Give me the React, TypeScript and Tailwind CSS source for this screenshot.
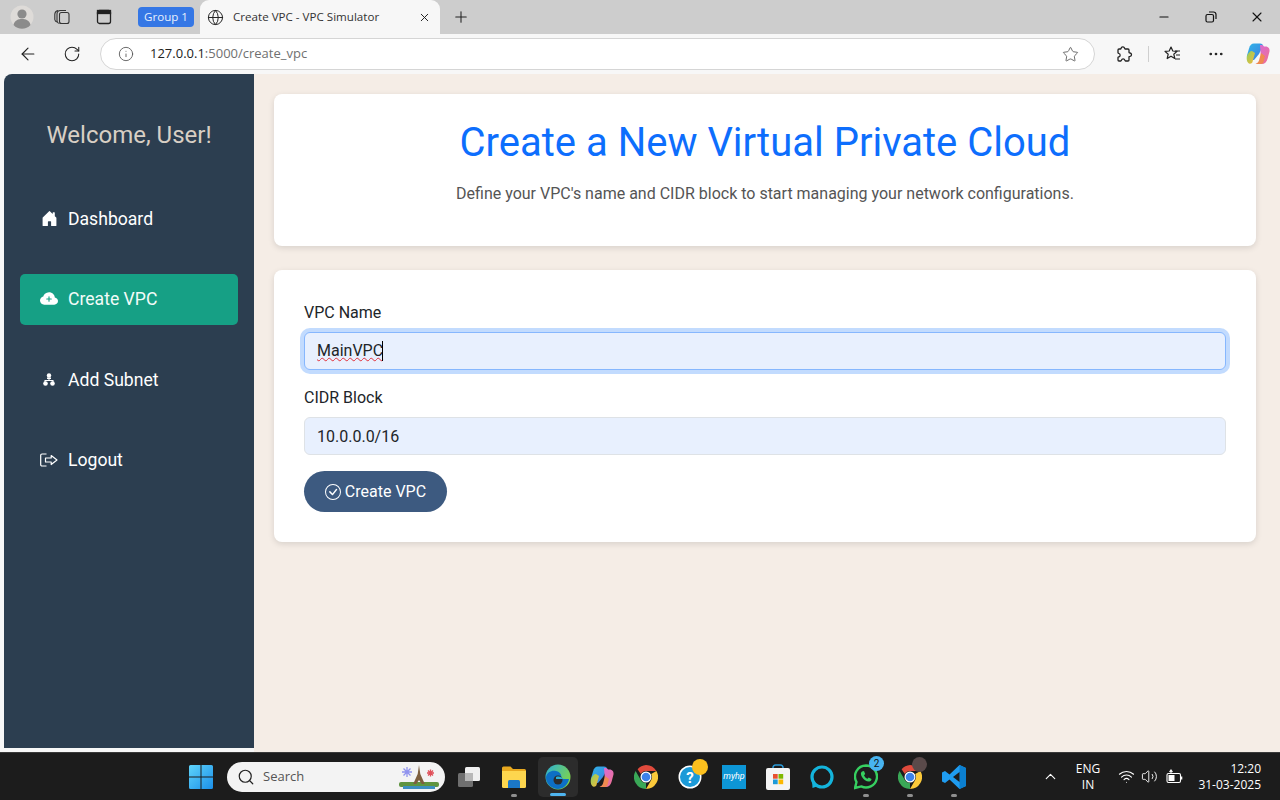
import React from "react";
import { BsHouseDoorFill, BsCloudPlusFill, BsCheckCircle } from "react-icons/bs";
import { ArrowLeft, RotateCw, Info, Star, Plus, X, Minus, Globe, Search, ChevronUp, Volume2, Wifi, MoreHorizontal } from "lucide-react";

const roboto = { fontFamily: "Roboto, sans-serif" };
const openSans = { fontFamily: "'Open Sans', sans-serif" };

function TabsIcon() {
  return (
    <svg width="18" height="18" viewBox="0 0 18 18" fill="none" stroke="#333" strokeWidth="1.1">
      <rect x="6.5" y="4.500" width="9.500" height="11" rx="2" />
      <path d="M6.500 15.500A3 3 0 0 1 4 13V6A3.500 3.500 0 0 1 7.500 2.500H13" />
      <path d="M4 14A3 3 0 0 1 1.800 11.500V6A4 4 0 0 1 5 2.500" />
    </svg>
  );
}
function VerticalTabs() {
  return (
    <svg width="16" height="16" viewBox="0 0 16 16" fill="none" stroke="#222" strokeWidth="1.3">
      <rect x="1.5" y="1.5" width="13" height="13" rx="2" />
      <rect x="1.5" y="1.5" width="13" height="3" fill="#222" />
    </svg>
  );
}
function Avatar() {
  return (
    <svg width="24" height="24" viewBox="0 0 24 24">
      <circle cx="12" cy="12" r="11.5" fill="#dedbd8" />
      <circle cx="12" cy="9" r="4.6" fill="#8b8b8b" />
      <path d="M3.5 20c1-5 5-6 8.500-6s7.500 1 8.500 6a11.500 11.500 0 0 1-17 0z" fill="#8b8b8b" />
    </svg>
  );
}
function Puzzle() {
  return (
    <svg width="18" height="18" viewBox="0 0 18 18" fill="none" stroke="#222" strokeWidth="1.3" strokeLinejoin="round">
      <path d="M6 3.500c.5-2 3-2 3.500-.5.2.6.200 1 .5 1h3a1 1 0 0 1 1 1v2.500c0 .5.500.5 1 .5 2 .3 2 3 0 3.300-.5 0-1 0-1 .5V15a1 1 0 0 1-1 1h-2.500c-.5 0-.5-.5-.7-1-.5-1.500-2.800-1.500-3.300 0-.2.500-.2 1-.7 1H4a1 1 0 0 1-1-1v-2.500c0-.5.500-.5 1-.7 1.500-.5 1.500-2.800 0-3.300-.5-.2-1-.2-1-.7V5a1 1 0 0 1 1-1h1.500c.3 0 .4-.2.500-.5z" />
    </svg>
  );
}
function Favorites() {
  return (
    <svg width="18" height="18" viewBox="0 0 18 18" fill="none" stroke="#222" strokeWidth="1.2" strokeLinejoin="round">
      <path d="M8 2l1.800 4 4.200.4-3.200 2.800 1 4.300L8 11.200l-3.800 2.300 1-4.300L2 6.400 6.200 6z" />
      <path d="M12 6h5M13 10h4M12 14h5" />
    </svg>
  );
}
function Copilot({ size = 24, id }: { size?: number; id: string }) {
  return (
    <svg width={size} height={size} viewBox="0 0 24 24">
      <defs>
        <linearGradient id={id + "a"} x1="0" y1="0" x2="1" y2="1">
          <stop offset="0" stopColor="#2fb6e8" />
          <stop offset="1" stopColor="#3f7be0" />
        </linearGradient>
        <linearGradient id={id + "b"} x1="0" y1="0" x2="1" y2="1">
          <stop offset="0" stopColor="#d56be0" />
          <stop offset="1" stopColor="#f0708c" />
        </linearGradient>
        <linearGradient id={id + "c"} x1="0" y1="0" x2="1" y2="1">
          <stop offset="0" stopColor="#8ed05a" />
          <stop offset="1" stopColor="#f5b93c" />
        </linearGradient>
      </defs>
      <path d="M8 1.500h6c2 0 3 1 3 2.500l-4 8-5 6H5c-3 0-4.500-2-4-4.500l2-7C4 3 5.500 1.500 8 1.500z" fill={`url(#${id}a)`} />
      <path d="M1 14c1-3 3-5 5-5l3 2-2.500 9c-.5 1.500-2 2-3.500 1.500C1 20.500.2 17 1 14z" fill={`url(#${id}c)`} />
      <path d="M14 3h1c1.500 0 2.500.5 3 1.500h1.500c3 0 4.500 2.500 4 5l-2 7.500c-.8 3-3 5-5.500 5H10c3-1 4-3 5-6z" fill={`url(#${id}b)`} />
      <path d="M15 11l-2 7.500c-.5 1.500-1.500 2.800-3.500 3.500H15c1 0 2-.8 2.500-2l1.500-6z" fill="#f08a50" />
    </svg>
  );
}
function LogoutIcon() {
  return (
    <svg width="18" height="14" viewBox="0 0 18 14" fill="none" stroke="#fff" strokeWidth="1.200" strokeLinejoin="round">
      <path d="M6.500 1H2a1.300 1.300 0 0 0-1.300 1.300v9.400A1.300 1.300 0 0 0 2 13h4.500" />
      <path d="M5.500 5h5.700V2.500L17 7l-5.800 4.500V9H5.500z" />
    </svg>
  );
}
function SubnetIcon() {
  return (
    <svg width="12" height="13" viewBox="0 0 12 13" fill="#fff">
      <circle cx="6" cy="2.500" r="2.200" />
      <path d="M4 4.500h4V6H4z" />
      <path d="M5.500 5.500h1V7h4v2h-1V8h-7v1h-1V7h4z" />
      <circle cx="2.500" cy="10.500" r="2.300" />
      <circle cx="9.500" cy="10.500" r="2.300" />
    </svg>
  );
}
function Windows() {
  return (
    <svg width="24" height="24" viewBox="0 0 24 24">
      <defs>
        <linearGradient id="win" x1="0" y1="0" x2="1" y2="1">
          <stop offset="0" stopColor="#5fd4fa" />
          <stop offset="1" stopColor="#1b8fe8" />
        </linearGradient>
      </defs>
      <path d="M0 1.500A1.500 1.500 0 0 1 1.500 0h10v11.500H0zM12.500 0h10A1.500 1.500 0 0 1 24 1.500v10H12.500zM0 12.500h11.500V24h-10A1.500 1.500 0 0 1 0 22.500zM12.500 12.500H24v10a1.500 1.500 0 0 1-1.500 1.500h-10z" fill="url(#win)" />
    </svg>
  );
}
function Eiffel() {
  return (
    <svg width="42" height="26" viewBox="0 0 42 26">
      <rect x="1" y="18" width="40" height="5" rx="2" fill="#5f9440" />
      <rect x="5" y="22" width="32" height="3" fill="#3d8fc0" />
      <path d="M21 1l1.300 9 4.500 10h-3l-2.800-4-2.800 4h-3l4.500-10z" fill="#7d5f3f" />
      <g stroke="#8f92ee" strokeWidth="1.300">
        <path d="M4 8h10M9 3v10M5.500 4.500l7 7M12.500 4.500l-7 7" />
      </g>
      <g stroke="#e0505a" strokeWidth="1.300">
        <path d="M29 9h7M32.500 5.500v7M30 6.500l5 5M35 6.500l-5 5" />
      </g>
    </svg>
  );
}
function TaskView() {
  return (
    <svg width="24" height="24" viewBox="0 0 24 24">
      <rect x="8" y="2" width="15" height="14" rx="1.500" fill="#f0f0f0" />
      <rect x="1" y="8" width="15" height="14" rx="1.500" fill="#6f6f6f" />
      <rect x="8" y="8" width="8" height="8" fill="#b8b8b8" />
    </svg>
  );
}
function Folder() {
  return (
    <svg width="24" height="24" viewBox="0 0 24 24">
      <path d="M0 3a1.500 1.500 0 0 1 1.500-1.500h7L11 4h11.500A1.500 1.500 0 0 1 24 5.500V8H0z" fill="#e9a91f" />
      <path d="M0 6h24v15.500a1.500 1.500 0 0 1-1.500 1.500h-21A1.500 1.500 0 0 1 0 21.500z" fill="#fdd64e" />
      <path d="M6 16.500a1.500 1.500 0 0 1 1.500-1.500h9a1.500 1.500 0 0 1 1.500 1.500V23H6z" fill="#1b78c8" />
    </svg>
  );
}
function Edge() {
  return (
    <svg width="26" height="26" viewBox="0 0 26 26">
      <defs>
        <linearGradient id="edg" x1="0" y1="0" x2="1" y2="0.600">
          <stop offset="0" stopColor="#2ab0d8" />
          <stop offset="1" stopColor="#7fd44a" />
        </linearGradient>
      </defs>
      <circle cx="13" cy="13" r="12.500" fill="url(#edg)" />
      <path d="M1 13C2 8 7 6 11 7c5 1 6 5 5 8h8c-1 6-6 10-11 10C7 25 .5 20 1 13z" fill="#0d6fc4" />
      <circle cx="13" cy="16" r="4.500" fill="#2c2c2c" />
      <path d="M11 13c3-1 6 0 7 2h-7z" fill="#2ab0d8" />
    </svg>
  );
}
function Chrome({ size = 24 }: { size?: number }) {
  return (
    <svg width={size} height={size} viewBox="0 0 24 24">
      <path d="M12 0a12 12 0 0 1 10.400 6H12a6 6 0 0 0-5.200 3L3.600 4.300A12 12 0 0 1 12 0z" fill="#e04a3c" />
      <path d="M22.400 6A12 12 0 0 1 12 24l5.200-9a6 6 0 0 0 0-6z" fill="#fbc93a" />
      <path d="M12 24A12 12 0 0 1 1.600 6l5.200 9a6 6 0 0 0 5.200 3z" fill="#3aa857" />
      <circle cx="12" cy="12" r="5.500" fill="#fff" />
      <circle cx="12" cy="12" r="4.300" fill="#3d82ea" />
    </svg>
  );
}
function Help() {
  return (
    <svg width="24" height="24" viewBox="0 0 24 24">
      <circle cx="12" cy="12" r="11.500" fill="#fff" />
      <circle cx="12" cy="12" r="10" fill="#1b9ad8" />
      <text x="12" y="17.500" textAnchor="middle" fontSize="15" fontWeight="700" fill="#fff" fontFamily="Roboto, sans-serif">?</text>
    </svg>
  );
}
function Store() {
  return (
    <svg width="24" height="26" viewBox="0 0 24 26">
      <path d="M7 5V3.500A2.500 2.500 0 0 1 9.500 1h5A2.500 2.500 0 0 1 17 3.500V5" fill="none" stroke="#2a9ad8" strokeWidth="1.500" />
      <rect x="0" y="4" width="24" height="22" rx="2" fill="#f4f4f4" />
      <rect x="7" y="10" width="4.700" height="4.700" fill="#e8502f" />
      <rect x="12.500" y="10" width="4.700" height="4.700" fill="#7fb800" />
      <rect x="7" y="15.500" width="4.700" height="4.700" fill="#1c9ad8" />
      <rect x="12.500" y="15.500" width="4.700" height="4.700" fill="#fcb800" />
    </svg>
  );
}
function Alexa() {
  return (
    <svg width="24" height="24" viewBox="0 0 24 24">
      <circle cx="12" cy="12" r="10" fill="none" stroke="#14b4dc" strokeWidth="3.200" />
      <path d="M2 14l.5 9 6-2z" fill="#14b4dc" />
    </svg>
  );
}
function Whatsapp() {
  return (
    <svg width="24" height="26" viewBox="0 0 24 26">
      <path d="M12 1.500a11 11 0 0 0-9.500 16.500L1 24l6.200-1.600A11 11 0 1 0 12 1.500z" fill="none" stroke="#36cf60" strokeWidth="2.400" />
      <path d="M8 7.500c-1.500 1-1.500 3 0 5.500s5 5 7.500 4.500c1.500-.3 2-1.500 2-2.500l-2.800-1.500-1.200 1.200c-1.500-.5-3-2-3.500-3.500l1.200-1.200L10 7z" fill="#36cf60" />
    </svg>
  );
}
function VSCode() {
  return (
    <svg width="24" height="24" viewBox="0 0 24 24">
      <path d="M17.500 0L24 3v18l-6.500 3L7.500 14.500 3 18l-3-1.500v-9L3 6l4.500 3.500z" fill="#1f9cf0" />
      <path d="M17.500 0L24 3v18l-6.500 3z" fill="#0b7fd0" />
      <path d="M17.500 7L11 12l6.500 5z" fill="#1c1c1c" />
    </svg>
  );
}
function Battery() {
  return (
    <svg width="18" height="16" viewBox="0 0 18 16" fill="none" stroke="#fff" strokeWidth="1.100">
      <rect x="1" y="4.500" width="13.500" height="9" rx="1.500" />
      <rect x="2.500" y="6" width="6" height="6" fill="#fff" stroke="none" />
      <path d="M15.500 7.500v3" strokeWidth="1.600" />
      <path d="M5 4V1M3.500 3L5 1l1.500 2" />
    </svg>
  );
}

function Dot({ blue = false }: { blue?: boolean }) {
  return (
    <span className={blue ? "absolute bottom-[1px] left-1/2 h-[3px] w-[16px] -translate-x-1/2 rounded-full bg-[#4fb4ef]" : "absolute bottom-[2px] left-1/2 h-[3px] w-[6px] -translate-x-1/2 rounded-full bg-[#8f8f8f]"} />
  );
}

function NavItem({ icon, label, active = false }: { icon: React.ReactNode; label: string; active?: boolean }) {
  return (
    <div className={active ? "flex h-[51px] items-center rounded-[5px] bg-[#16a085] pl-[20px] text-[#f2fbf8]" : "flex h-[51px] items-center rounded-[5px] pl-[20px] text-white"}>
      <span className="flex w-[18px] items-center justify-center">{icon}</span>
      <span className="ml-[10px] pt-[2px] text-[17.600px] leading-none">{label}</span>
    </div>
  );
}

export default function App() {
  return (
    <div className="flex h-[800px] w-[1280px] flex-col overflow-hidden bg-[#f7f7f7]" style={roboto}>
      {/* Tab strip */}
      <div className="flex h-[34px] items-center bg-[#cdcdcd]" style={openSans}>
        <span className="ml-[10px] flex"><Avatar /></span>
        <span className="ml-[19px] flex"><TabsIcon /></span>
        <span className="ml-[25px] flex"><VerticalTabs /></span>
        <span className="ml-[26px] flex h-[20px] w-[56px] items-center justify-center rounded-[4px] bg-[#3577e5] text-[11.600px] text-[#e8f0fd]">Group 1</span>
        <div className="ml-[6px] flex h-[34px] w-[240px] items-center self-end rounded-t-[9px] bg-[#f7f7f7] pl-[7px]">
          <Globe size={17} color="#222" strokeWidth={1.4} />
          <span className="ml-[9px] text-[11.600px] text-[#333]">Create VPC - VPC Simulator</span>
          <X size={13} color="#222" strokeWidth={1.8} className="ml-auto mr-[9px]" />
        </div>
        <Plus size={18} color="#222" strokeWidth={1.4} className="ml-[12px]" />
        <Minus size={14} color="#111" strokeWidth={1.8} className="ml-auto mr-[34px]" />
        <svg width="12" height="12" viewBox="0 0 12 12" fill="none" stroke="#111" strokeWidth="1.200" className="mr-[32px]">
          <rect x="1" y="3.500" width="7.500" height="7.500" rx="1.500" />
          <path d="M4 1h4.500A2.500 2.500 0 0 1 11 3.500V8" />
        </svg>
        <X size={16} color="#111" strokeWidth={1.6} className="mr-[15px]" />
      </div>
      {/* Toolbar */}
      <div className="flex h-[40px] items-center">
        <ArrowLeft size={20} color="#222" strokeWidth={1.4} className="ml-[18px]" />
        <RotateCw size={18} color="#222" strokeWidth={1.4} className="ml-[25px]" />
        <div className="ml-[19px] flex h-[32px] w-[995px] items-center rounded-full border border-[#d5d5d5] bg-white pl-[17px]">
          <Info size={16} color="#555" strokeWidth={1.3} />
          <span className="ml-[16px] text-[13px]" style={openSans}>
            <span className="text-[#222]">127.0.0.1</span>
            <span className="text-[#707070]">:5000/create_vpc</span>
          </span>
          <Star size={17} color="#555" strokeWidth={1.2} className="ml-auto mr-[15px]" />
        </div>
        <span className="ml-[20px] flex"><Puzzle /></span>
        <span className="ml-[15px] h-[16px] w-px bg-[#cfcfcf]" />
        <span className="ml-[14px] flex"><Favorites /></span>
        <MoreHorizontal size={18} color="#222" strokeWidth={1.6} className="ml-[26px]" />
        <span className="ml-[21px] flex"><Copilot id="cp1" /></span>
      </div>
      {/* Page */}
      <div className="flex h-[678px] bg-[#f7f7f7]">
        <div className="ml-[4px] flex h-[674px] w-[250px] shrink-0 flex-col rounded-tl-[8px] bg-[#2c3e50] px-[16px]">
          <div className="mb-[44px] mt-[47px] text-center text-[24px] leading-[28px] text-[#d8cfc4]">Welcome, User!</div>
          <div className="flex flex-col gap-[29.500px]">
            <NavItem icon={<BsHouseDoorFill size={17} color="#fff" />} label="Dashboard" />
            <NavItem active icon={<BsCloudPlusFill size={18} color="#fff" />} label="Create VPC" />
            <NavItem icon={<SubnetIcon />} label="Add Subnet" />
            <NavItem icon={<LogoutIcon />} label="Logout" />
          </div>
        </div>
        <div className="flex h-[678px] flex-1 flex-col gap-[24px] bg-[#f5ede6] pl-[20px] pr-[24px] pt-[20px]">
          <div className="flex h-[152px] flex-col items-center rounded-[8px] bg-white pt-[25px] shadow-[0_2px_6px_rgba(0,0,0,0.12)]">
            <h1 className="text-[40px] leading-[48px] text-[#0d6efd]">Create a New Virtual Private Cloud</h1>
            <p className="mt-[15px] text-[16px] leading-[24px] text-[#555555]">Define your VPC's name and CIDR block to start managing your network configurations.</p>
          </div>
          <div className="flex h-[272px] flex-col items-start rounded-[8px] bg-white px-[30px] pt-[31px] shadow-[0_2px_6px_rgba(0,0,0,0.12)]">
            <label className="text-[16px] leading-[24px] text-[#212529]">VPC Name</label>
            <div className="mt-[7px] flex h-[38px] w-full items-center rounded-[6px] border border-[#86b7fe] bg-[#e8f0fe] pl-[12px] text-[16px] text-[#212529] shadow-[0_0_0_4px_rgba(13,110,253,0.25)]">
              <span className="underline decoration-wavy decoration-[#e0303a] decoration-1">MainVPC</span>
              <span className="-ml-[1px] h-[20px] w-px bg-black" />
            </div>
            <label className="mt-[16px] text-[16px] leading-[24px] text-[#212529]">CIDR Block</label>
            <div className="mt-[7px] flex h-[38px] w-full items-center rounded-[6px] border border-[#dee2e6] bg-[#e8f0fe] pl-[12px] pt-[1px] text-[16px] text-[#212529]">10.0.0.0/16</div>
            <button className="mt-[16px] flex h-[41px] w-[143px] items-center justify-center rounded-full bg-[#3d5a80] text-[16px] text-white">
              <BsCheckCircle size={16} />
              <span className="ml-[4px]">Create VPC</span>
            </button>
          </div>
        </div>
      </div>
      {/* Taskbar */}
      <div className="flex h-[48px] items-center border-t border-[#3a3a3a] bg-[#1c1c1c] text-white">
        <span className="relative ml-[189px] flex"><Windows /></span>
        <div className="ml-[14px] flex h-[30px] w-[218px] items-center rounded-full bg-[#f3f3f3] pl-[10px]" style={openSans}>
          <Search size={18} color="#222" strokeWidth={1.6} />
          <span className="ml-[8px] text-[13px] text-[#555]">Search</span>
          <span className="ml-auto mr-[5px] flex"><Eiffel /></span>
        </div>
        <span className="ml-[12px] flex"><TaskView /></span>
        <span className="relative ml-[21px] flex h-[44px] w-[24px] items-center"><Folder /><Dot /></span>
        <span className="relative ml-[12px] flex h-[40px] w-[40px] items-center justify-center rounded-[5px] bg-[#2c2c2c]"><Edge /><Dot blue /></span>
        <span className="ml-[12px] flex"><Copilot id="cp2" /></span>
        <span className="ml-[20px] flex"><Chrome /></span>
        <span className="relative ml-[20px] flex">
          <Help />
          <span className="absolute -right-[6px] -top-[6px] h-[16px] w-[16px] rounded-full bg-[#fcc01e]" />
        </span>
        <span className="ml-[20px] flex h-[24px] w-[24px] items-center justify-center bg-[#0d96d6] text-[9px] italic text-white">myhp</span>
        <span className="ml-[20px] flex"><Store /></span>
        <span className="ml-[20px] flex"><Alexa /></span>
        <span className="relative ml-[20px] flex h-[44px] w-[24px] items-center">
          <Whatsapp />
          <span className="absolute -right-[6px] top-[1px] flex h-[15px] w-[15px] items-center justify-center rounded-full bg-[#48b4f0] text-[10px] text-[#111]">2</span>
          <Dot />
        </span>
        <span className="relative ml-[20px] flex h-[44px] w-[24px] items-center">
          <Chrome />
          <span className="absolute -right-[5px] top-[2px] h-[15px] w-[15px] rounded-full bg-[#5a4a4a]" />
          <Dot />
        </span>
        <span className="relative ml-[20px] flex h-[44px] w-[24px] items-center"><VSCode /><Dot /></span>
        <ChevronUp size={17} color="#fff" strokeWidth={1.6} className="ml-[76px]" />
        <div className="ml-[16px] flex w-[26px] flex-col items-center text-[12px] leading-[16px]" style={openSans}>
          <span>ENG</span>
          <span>IN</span>
        </div>
        <Wifi size={17} color="#fff" strokeWidth={1.5} className="ml-[17px]" />
        <Volume2 size={17} color="#fff" strokeWidth={1.3} className="ml-[6px]" />
        <span className="ml-[8px] flex"><Battery /></span>
        <div className="ml-auto mr-[19px] flex flex-col items-end text-[12px] leading-[16px]" style={openSans}>
          <span>12:20</span>
          <span>31-03-2025</span>
        </div>
      </div>
    </div>
  );
}
